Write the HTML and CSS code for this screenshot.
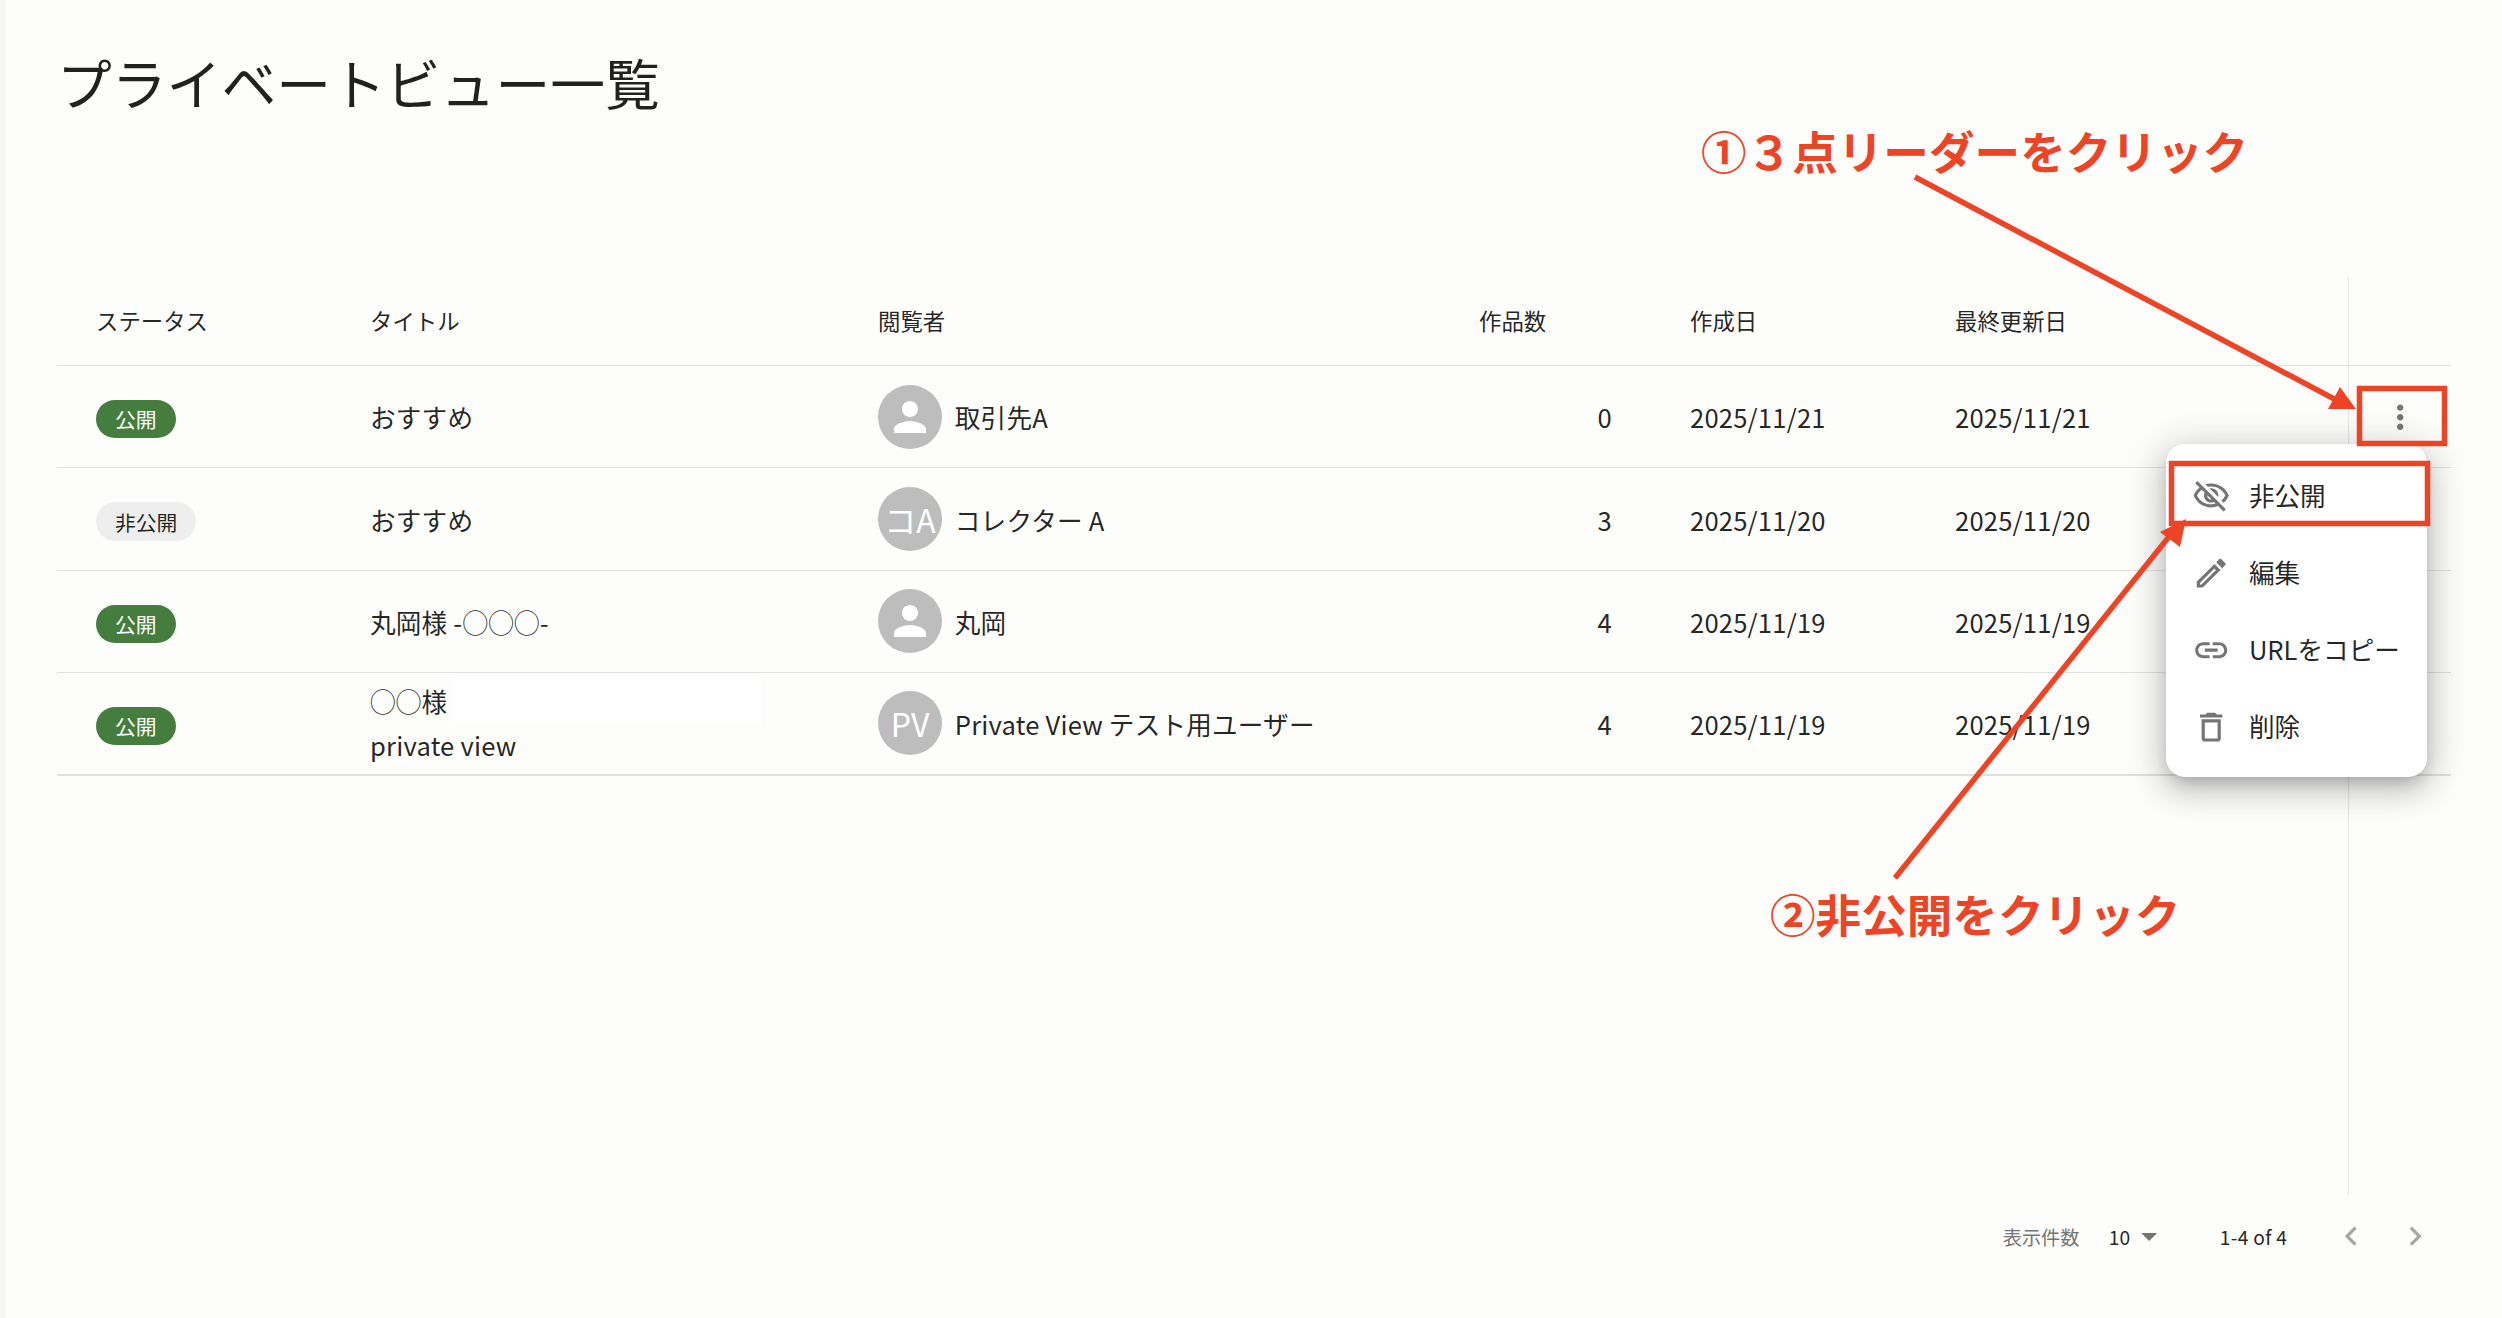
FILE: index.html
```html
<!DOCTYPE html>
<html lang="ja">
<head>
    <meta charset="UTF-8">
    <meta name="viewport" content="width=device-width, initial-scale=1.0">
    <title>プライベートビュー一覧</title>
    <link rel="stylesheet" href="styles.css">
</head>
<body>
    <div class="page">
        <h1 class="page-title">プライベートビュー一覧</h1>

        <div class="table-wrap">
            <div class="row row-head">
                <div class="cell cell-status">ステータス</div>
                <div class="cell">タイトル</div>
                <div class="cell">閲覧者</div>
                <div class="cell">作品数</div>
                <div class="cell cell-created">作成日</div>
                <div class="cell">最終更新日</div>
                <div class="cell"></div>
            </div>

            <div class="row">
                <div class="cell cell-status"><span class="chip chip-public">公開</span></div>
                <div class="cell">おすすめ</div>
                <div class="cell cell-viewer">
                    <span class="avatar">
                        <svg class="avatar-person" viewBox="0 0 24 24"><path d="M12 12c2.21 0 4-1.79 4-4s-1.79-4-4-4-4 1.79-4 4 1.79 4 4 4zm0 2c-2.67 0-8 1.34-8 4v2h16v-2c0-2.66-5.33-4-8-4z"/></svg>
                    </span>
                    取引先A
                </div>
                <div class="cell cell-count">0</div>
                <div class="cell cell-created">2025/11/21</div>
                <div class="cell">2025/11/21</div>
                <div class="cell cell-action">
                    <svg class="icon" viewBox="0 0 24 24"><path d="M12 8c1.1 0 2-.9 2-2s-.9-2-2-2-2 .9-2 2 .9 2 2 2zm0 2c-1.1 0-2 .9-2 2s.9 2 2 2 2-.9 2-2-.9-2-2-2zm0 6c-1.1 0-2 .9-2 2s.9 2 2 2 2-.9 2-2-.9-2-2-2z"/></svg>
                </div>
            </div>

            <div class="row">
                <div class="cell cell-status"><span class="chip">非公開</span></div>
                <div class="cell">おすすめ</div>
                <div class="cell cell-viewer">
                    <span class="avatar">コA</span>
                    コレクター A
                </div>
                <div class="cell cell-count">3</div>
                <div class="cell cell-created">2025/11/20</div>
                <div class="cell">2025/11/20</div>
                <div class="cell"></div>
            </div>

            <div class="row">
                <div class="cell cell-status"><span class="chip chip-public">公開</span></div>
                <div class="cell">丸岡様 -◯◯◯-</div>
                <div class="cell cell-viewer">
                    <span class="avatar">
                        <svg class="avatar-person" viewBox="0 0 24 24"><path d="M12 12c2.21 0 4-1.79 4-4s-1.79-4-4-4-4 1.79-4 4 1.79 4 4 4zm0 2c-2.67 0-8 1.34-8 4v2h16v-2c0-2.66-5.33-4-8-4z"/></svg>
                    </span>
                    丸岡
                </div>
                <div class="cell cell-count">4</div>
                <div class="cell cell-created">2025/11/19</div>
                <div class="cell">2025/11/19</div>
                <div class="cell"></div>
            </div>

            <div class="row row-last">
                <div class="cell cell-status"><span class="chip chip-public">公開</span></div>
                <div class="cell cell-title-multi">
                    <span class="title-line">◯◯様<span class="erased"></span></span>
                    <span class="title-line">private view</span>
                </div>
                <div class="cell cell-viewer">
                    <span class="avatar">PV</span>
                    Private View テスト用ユーザー
                </div>
                <div class="cell cell-count">4</div>
                <div class="cell cell-created">2025/11/19</div>
                <div class="cell">2025/11/19</div>
                <div class="cell"></div>
            </div>
        </div>

        <div class="pagination">
            <span class="rows-label">表示件数</span>
            <span class="rows-value">10</span>
            <svg class="icon rows-arrow" viewBox="0 0 24 24"><path d="M7 10l5 5 5-5z"/></svg>
            <span class="rows-range">1-4 of 4</span>
            <svg class="icon icon-disabled page-prev" viewBox="0 0 24 24"><path d="M15.41 7.41 14 6l-6 6 6 6 1.41-1.41L10.83 12z"/></svg>
            <svg class="icon icon-disabled page-next" viewBox="0 0 24 24"><path d="M10 6 8.59 7.41 13.17 12l-4.58 4.59L10 18l6-6z"/></svg>
        </div>
    </div>

    <div class="menu">
        <div class="menu-item">
            <svg class="icon" viewBox="0 0 24 24"><path d="M12 6c3.79 0 7.17 2.13 8.82 5.5-.59 1.22-1.42 2.27-2.41 3.12l1.41 1.41c1.39-1.23 2.49-2.77 3.18-4.53C21.27 7.11 17 4 12 4c-1.27 0-2.49.2-3.64.57l1.65 1.65C10.66 6.09 11.32 6 12 6zm-1.07 1.14L13 9.21c.57.25 1.03.71 1.28 1.28l2.07 2.07c.08-.34.14-.7.14-1.07C16.5 9.01 14.48 7 12 7c-.37 0-.72.05-1.07.14zM2.01 3.87l2.68 2.68C3.06 7.83 1.78 9.53 1 11.5 2.73 15.89 7 19 12 19c1.52 0 2.98-.29 4.32-.82l3.42 3.42 1.41-1.41L3.42 2.45 2.01 3.87zm7.5 7.5l2.61 2.61c-.04.01-.08.02-.12.02-1.38 0-2.5-1.12-2.5-2.5 0-.05.01-.08.01-.13zm-3.4-3.4l1.75 1.75c-.23.55-.36 1.15-.36 1.78 0 2.48 2.02 4.5 4.5 4.5.63 0 1.23-.13 1.77-.36l.98.98c-.88.24-1.8.38-2.75.38-3.79 0-7.17-2.13-8.82-5.5.7-1.43 1.72-2.61 2.93-3.53z"/></svg>
            <span class="menu-text">非公開</span>
        </div>
        <div class="menu-item">
            <svg class="icon" viewBox="0 0 24 24"><path d="M14.06 9.02l.92.92L5.92 19H5v-.92l9.06-9.06M17.66 3c-.25 0-.51.1-.7.29l-1.83 1.83 3.75 3.75 1.83-1.83c.39-.39.39-1.02 0-1.41l-2.34-2.34c-.2-.2-.45-.29-.71-.29zm-3.6 3.19L3 17.25V21h3.75L17.81 9.94l-3.75-3.75z"/></svg>
            <span class="menu-text">編集</span>
        </div>
        <div class="menu-item">
            <svg class="icon" viewBox="0 0 24 24"><path d="M3.9 12c0-1.71 1.39-3.1 3.1-3.1h4V7H7c-2.76 0-5 2.24-5 5s2.24 5 5 5h4v-1.9H7c-1.71 0-3.1-1.39-3.1-3.1zM8 13h8v-2H8v2zm9-6h-4v1.9h4c1.71 0 3.1 1.39 3.1 3.1s-1.39 3.1-3.1 3.1h-4V17h4c2.76 0 5-2.24 5-5s-2.24-5-5-5z"/></svg>
            <span class="menu-text">URLをコピー</span>
        </div>
        <div class="menu-item">
            <svg class="icon" viewBox="0 0 24 24"><path d="M6 19c0 1.1.9 2 2 2h8c1.1 0 2-.9 2-2V7H6v12zM8 9h8v10H8V9zm7.5-5l-1-1h-5l-1 1H5v2h14V4z"/></svg>
            <span class="menu-text">削除</span>
        </div>
    </div>

    <!-- red annotations on top of the screenshot -->
    <svg class="marks" viewBox="0 0 2502 1318">
        <rect class="mark-line" x="2359.5" y="388.5" width="85" height="55"/>
        <rect class="mark-line" x="2171.5" y="463.5" width="256" height="60"/>
        <line class="mark-line" x1="1915" y1="177" x2="2338" y2="401"/>
        <polygon class="mark-head" points="2340,387 2328,409 2356,409"/>
        <line class="mark-line" x1="1895" y1="878" x2="2172" y2="533"/>
        <polygon class="mark-head" points="2186,519 2160,532 2180,547"/>
    </svg>
    <div class="note note-one">①３点リーダーをクリック</div>
    <div class="note note-two">②非公開をクリック</div>
</body>
</html>
```

FILE: styles.css
```css
* {
    box-sizing: border-box;
}
html, body {
    margin: 0;
    height: 100%;
}
body {
    position: relative;
    overflow: hidden;
    font-family: "Noto Sans CJK JP", "Noto Sans", sans-serif;
    font-size: 25.6px;
    color: rgba(0,0,0,0.87);
    background-color: #fdfdfb;
}
.page {
    height: 1318px;
    padding: 48px 51px 0 51px;
    border-left: 6px solid #f4f6f1;
}
.page-title {
    margin: 0 0 162px;
    font-size: 54.8px;
    font-weight: 400;
    line-height: 67px;
}

/* table */
.table-wrap {
    position: relative;
    height: 918px;
}
.table-wrap::after {
    content: "";
    position: absolute;
    top: 0;
    bottom: 0;
    left: 2291px;
    width: 1px;
    background-color: #e4e4e4;
}
.row {
    display: grid;
    grid-template-columns: 313px 508px 601px 133px 343px 393px 103px;
    height: 102.4px;
    border-bottom: 1px solid #e0e0e0;
    letter-spacing: 0.2px;
}
.row-head {
    height: 89px;
    padding-bottom: 2px;
    font-size: 22.4px;
    letter-spacing: 0;
}
.row-last {
    border-bottom-width: 2px;
}
.cell {
    display: flex;
    align-items: center;
    min-width: 0;
    white-space: nowrap;
}
.cell-status {
    padding-left: 39px;
}
.cell-created {
    padding-left: 78px;
}
.cell-count {
    justify-content: flex-end;
}
.cell-action {
    justify-content: flex-end;
    padding-right: 32px;
}
.cell-title-multi {
    flex-direction: column;
    align-items: flex-start;
    justify-content: center;
    line-height: 44.8px;
}
.title-line {
    position: relative;
}
.erased {
    position: absolute;
    top: -1px;
    left: 82px;
    width: 310px;
    height: 47px;
    background-color: #fff;
}

.chip {
    display: inline-flex;
    align-items: center;
    height: 38.4px;
    margin-top: 5px;
    padding: 0 19px;
    border-radius: 20px;
    font-size: 20.8px;
    letter-spacing: 0;
    background-color: #eeeeee;
}
.chip-public {
    color: #fff;
    background-color: #447d3d;
}

.cell-viewer {
    gap: 12.8px;
}
.avatar {
    display: flex;
    align-items: center;
    justify-content: center;
    flex: none;
    width: 64px;
    height: 64px;
    border-radius: 50%;
    font-size: 32px;
    letter-spacing: 0;
    color: #fff;
    background-color: #bdbdbd;
}
.avatar-person {
    width: 48px;
    height: 48px;
    fill: #fff;
}

.icon {
    flex: none;
    width: 38.4px;
    height: 38.4px;
    fill: #757575;
}
.icon-disabled {
    fill: #a6a6a6;
}

/* pagination */
.pagination {
    display: flex;
    align-items: center;
    justify-content: flex-end;
    height: 83px;
    padding-right: 17px;
    font-size: 19.2px;
}
.rows-label {
    color: #757575;
}
.rows-value {
    margin-left: 29.4px;
}
.rows-range {
    margin-left: 51.2px;
    letter-spacing: 0.3px;
}
.page-prev {
    margin-left: 44.5px;
}
.page-next {
    margin-left: 25.5px;
}

/* popup menu */
.menu {
    position: absolute;
    top: 444px;
    left: 2166px;
    width: 261px;
    height: 333px;
    padding: 14px 0 12px;
    border-radius: 19px;
    background-color: #fff;
    box-shadow: 0 8px 16px -5px rgba(0,0,0,0.2), 0 13px 32px 2px rgba(0,0,0,0.14), 0 5px 40px 7px rgba(0,0,0,0.12);
}
.menu-item {
    display: flex;
    align-items: center;
    gap: 18.5px;
    height: 76.8px;
    padding-left: 26px;
    white-space: nowrap;
}
.menu-text {
    margin-top: -3px;
}

/* annotations */
.marks {
    position: absolute;
    top: 0;
    left: 0;
    width: 2502px;
    height: 1318px;
}
.mark-line {
    fill: none;
    stroke: #ee4426;
    stroke-width: 5.5;
}
.mark-head {
    fill: #ee4426;
}
.note {
    position: absolute;
    font-size: 45.6px;
    font-weight: 700;
    line-height: 60px;
    color: #ee4426;
    white-space: nowrap;
}
.note-one {
    top: 120px;
    left: 1701px;
}
.note-two {
    top: 883px;
    left: 1770px;
}
```
